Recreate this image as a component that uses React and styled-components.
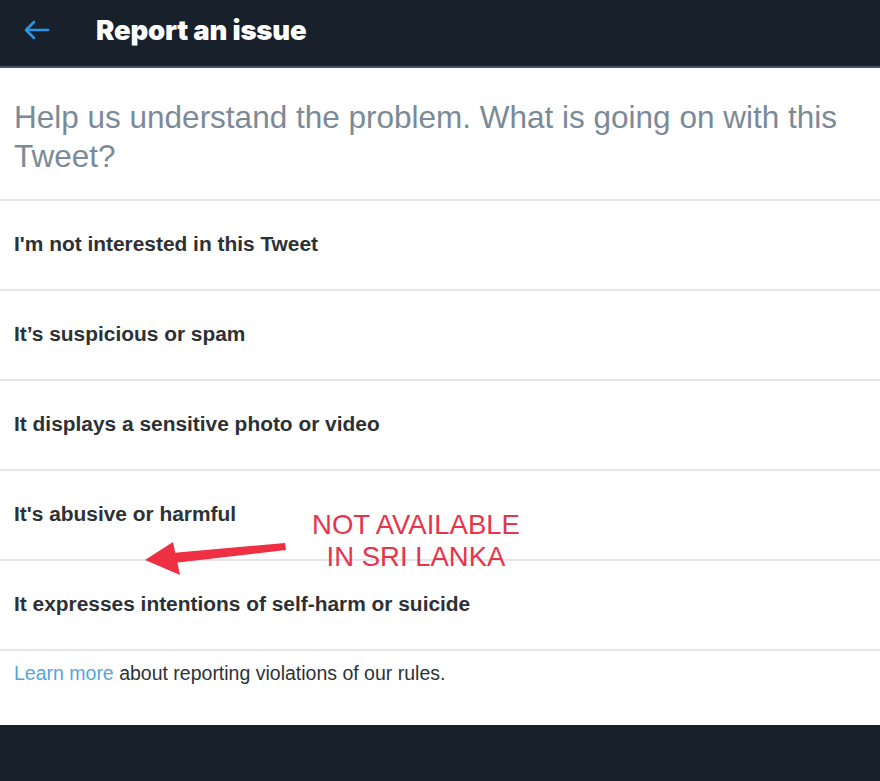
import React from "react";
import styled, { createGlobalStyle } from "styled-components";

const Global = createGlobalStyle`
  html, body { margin: 0; padding: 0; background: #ffffff; }
  #root { min-height: 100vh; }
  * { box-sizing: border-box; }
`;

const Page = styled.div`
  position: relative;
  min-height: 100vh;
  display: flex;
  flex-direction: column;
  font-family: "Liberation Sans", Arial, sans-serif;
  background: #ffffff;
`;

const Header = styled.header`
  height: 68px;
  background: #17202b;
  border-bottom: 2px solid #435566;
  display: flex;
  align-items: center;
  padding-left: 24px;
  gap: 46px;
`;

const BackButton = styled.button`
  background: none;
  border: 0;
  padding: 0;
  width: 26px;
  height: 26px;
  display: flex;
  align-items: center;
  justify-content: center;
  cursor: pointer;
  margin-top: -6px;
`;

const Title = styled.h1`
  margin: 0;
  color: #ffffff;
  font-family: Inter, "Open Sans", sans-serif;
  font-weight: 900;
  font-size: 27.5px;
  letter-spacing: -0.2px;
  margin-top: -7px;
`;

const Question = styled.h2`
  margin: 0;
  padding: 30px 30px 23px 14px;
  font-weight: 400;
  font-size: 31.5px;
  line-height: 39px;
  color: #7b8a98;
  border-bottom: 2px solid #e3e7eb;
`;

const Option = styled.div`
  height: 90px;
  padding-left: 14px;
  padding-bottom: 2px;
  display: flex;
  align-items: center;
  font-weight: 700;
  font-size: 20.9px;
  color: #2c3136;
  border-bottom: 2px solid #e3e7eb;
`;

const Footer = styled.div`
  padding: 10px 14px 0;
  height: 74px;
  font-size: 19.5px;
  line-height: 24px;
  color: #2d3236;
`;

const Link = styled.a`
  color: #55a5d9;
  text-decoration: none;
`;

const BottomBar = styled.div`
  flex: 1;
  background: #17202b;
`;

const Annotation = styled.div`
  position: absolute;
  left: 300px;
  top: 509px;
  width: 232px;
  text-align: center;
  color: #e8334a;
  font-size: 27.5px;
  line-height: 32px;
  pointer-events: none;
`;

const Arrow = styled.svg`
  position: absolute;
  left: 140px;
  top: 536px;
  pointer-events: none;
`;

const options = [
  "I'm not interested in this Tweet",
  "It’s suspicious or spam",
  "It displays a sensitive photo or video",
  "It's abusive or harmful",
  "It expresses intentions of self-harm or suicide",
];

export default function App() {
  return (
    <Page>
      <Global />
      <Header>
        <BackButton aria-label="Back">
          <svg width="26" height="20" viewBox="0 0 26 20" fill="none">
            <path d="M2 10 H24 M10 2 L2 10 L10 18" stroke="#2b95e6" strokeWidth="2.6" strokeLinecap="round" strokeLinejoin="round" />
          </svg>
        </BackButton>
        <Title>Report an issue</Title>
      </Header>
      <Question>Help us understand the problem. What is going on with this Tweet?</Question>
      {options.map((o) => (
        <Option key={o}>{o}</Option>
      ))}
      <Footer>
        <Link href="#">Learn more</Link> about reporting violations of our rules.
      </Footer>
      <BottomBar />
      <Arrow width="150" height="45" viewBox="0 0 150 45">
        <polygon points="5,24 33,6 40,39" fill="#ee3042" />
        <polygon points="32,17 145,7 146,14 34,27" fill="#ee3042" />
      </Arrow>
      <Annotation>
        NOT AVAILABLE
        <br />
        IN SRI LANKA
      </Annotation>
    </Page>
  );
}
